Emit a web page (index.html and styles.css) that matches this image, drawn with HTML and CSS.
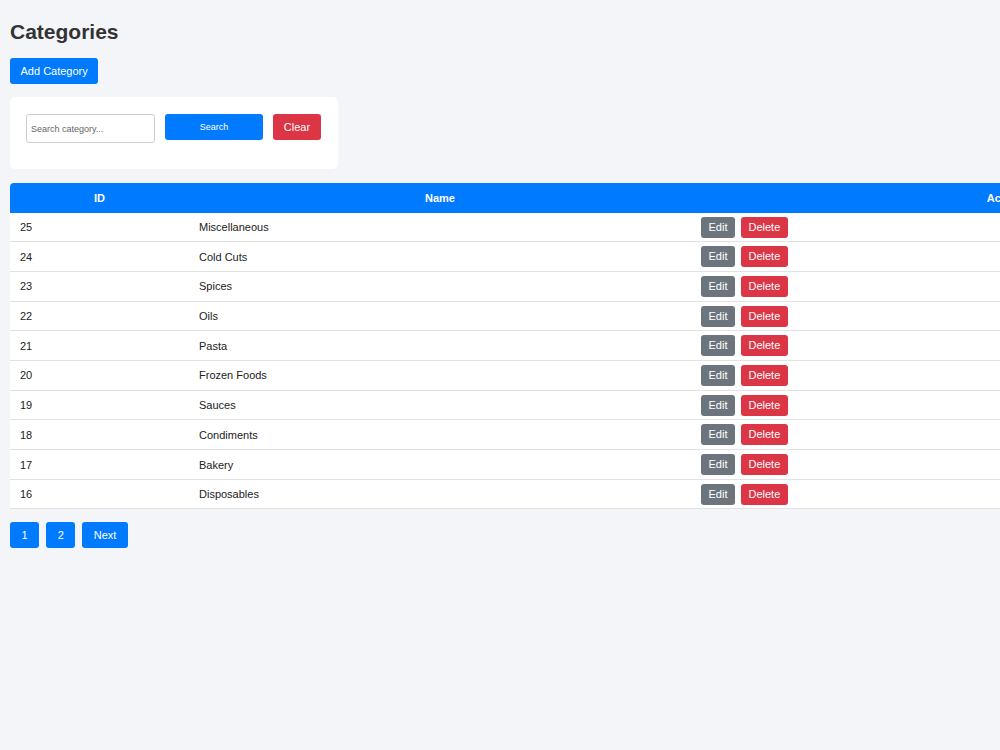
FILE: index.html
```html
<!DOCTYPE html>
<html lang="en">
<head>
    <meta charset="UTF-8">
    <meta name="viewport" content="width=device-width, initial-scale=1.0">
    <title>Categories</title>
    <link rel="stylesheet" href="styles.css">
</head>
<body>
    <h1 class="page-title">Categories</h1>
    <button class="btn btn-primary btn-add">Add Category</button>

    <!-- Search form -->
    <form class="search-card">
        <input type="text" class="search-input" placeholder="Search category...">
        <button type="button" class="btn btn-primary btn-search">Search</button>
        <button type="button" class="btn btn-danger btn-clear">Clear</button>
    </form>

    <table class="category-table">
        <thead>
            <tr>
                <th class="col-id">ID</th>
                <th class="col-name">Name</th>
                <th class="col-actions">Actions</th>
            </tr>
        </thead>
        <tbody>
            <tr><td>25</td><td>Miscellaneous</td><td><button class="btn btn-secondary btn-sm">Edit</button><button class="btn btn-danger btn-sm">Delete</button></td></tr>
            <tr><td>24</td><td>Cold Cuts</td><td><button class="btn btn-secondary btn-sm">Edit</button><button class="btn btn-danger btn-sm">Delete</button></td></tr>
            <tr><td>23</td><td>Spices</td><td><button class="btn btn-secondary btn-sm">Edit</button><button class="btn btn-danger btn-sm">Delete</button></td></tr>
            <tr><td>22</td><td>Oils</td><td><button class="btn btn-secondary btn-sm">Edit</button><button class="btn btn-danger btn-sm">Delete</button></td></tr>
            <tr><td>21</td><td>Pasta</td><td><button class="btn btn-secondary btn-sm">Edit</button><button class="btn btn-danger btn-sm">Delete</button></td></tr>
            <tr><td>20</td><td>Frozen Foods</td><td><button class="btn btn-secondary btn-sm">Edit</button><button class="btn btn-danger btn-sm">Delete</button></td></tr>
            <tr><td>19</td><td>Sauces</td><td><button class="btn btn-secondary btn-sm">Edit</button><button class="btn btn-danger btn-sm">Delete</button></td></tr>
            <tr><td>18</td><td>Condiments</td><td><button class="btn btn-secondary btn-sm">Edit</button><button class="btn btn-danger btn-sm">Delete</button></td></tr>
            <tr><td>17</td><td>Bakery</td><td><button class="btn btn-secondary btn-sm">Edit</button><button class="btn btn-danger btn-sm">Delete</button></td></tr>
            <tr><td>16</td><td>Disposables</td><td><button class="btn btn-secondary btn-sm">Edit</button><button class="btn btn-danger btn-sm">Delete</button></td></tr>
        </tbody>
    </table>

    <div class="pagination">
        <button class="btn btn-primary page-btn">1</button>
        <button class="btn btn-primary page-btn">2</button>
        <button class="btn btn-primary page-btn">Next</button>
    </div>
</body>
</html>
```

FILE: styles.css
```css
/* Base page */
body {
    font-family: 'Liberation Sans', Arial, sans-serif;
    margin: 0;
    padding: 10px;
    background-color: #f4f5f9;
    color: #222;
    overflow-x: hidden;
}

.page-title {
    font-size: 21px;
    font-weight: bold;
    color: #333;
    margin: 10px 0 14px;
    line-height: 24px;
}

/* Buttons */
.btn {
    font-family: inherit;
    font-size: 11px;
    line-height: 14px;
    border: none;
    border-radius: 3px;
    color: #fff;
    padding: 6px 12px;
    cursor: pointer;
    display: inline-block;
}

.btn-primary {
    background-color: #007bff;
}

.btn-danger {
    background-color: #dc3545;
}

.btn-secondary {
    background-color: #6c757d;
}

.btn-add {
    display: block;
    padding: 6px 10.5px;
}

/* Search card */
.search-card {
    display: flex;
    align-items: flex-start;
    gap: 10px;
    width: fit-content;
    background-color: #fff;
    border-radius: 5px;
    padding: 17px 17px 26px 16px;
    margin: 13px 0 14px;
}

.search-input {
    width: 129px;
    height: 29px;
    box-sizing: border-box;
    border: 1px solid #ccc;
    border-radius: 3px;
    padding: 0 4px;
    font-family: inherit;
    font-size: 9px;
    color: #333;
}

.search-input::placeholder {
    color: #666;
}

.btn-search {
    width: 98px;
    font-size: 9px;
}

.btn-clear {
    width: 48px;
    padding: 6px 0;
}

/* Table */
.category-table {
    border-collapse: collapse;
    table-layout: fixed;
    width: 1313px;
    background-color: #fff;
    border-radius: 4px 4px 0 0;
    overflow: hidden;
    font-size: 11px;
}

.category-table th {
    background-color: #007bff;
    color: #fff;
    font-weight: bold;
    text-align: center;
    padding: 0 10px;
    height: 29.5px;
}

.col-id {
    width: 159px;
}

.col-name {
    width: 482px;
}

.category-table td {
    padding: 4px 10px 3.7px;
    height: 21px;
    border-bottom: 1px solid #e2e2e2;
    text-align: left;
}

.btn-sm {
    padding: 4px 7.5px;
    line-height: 13px;
    margin-right: 6px;
    vertical-align: middle;
}

/* Pagination */
.pagination {
    display: flex;
    gap: 7px;
    margin-top: 13px;
}

.page-btn {
    padding: 6px 11.5px;
}
```
